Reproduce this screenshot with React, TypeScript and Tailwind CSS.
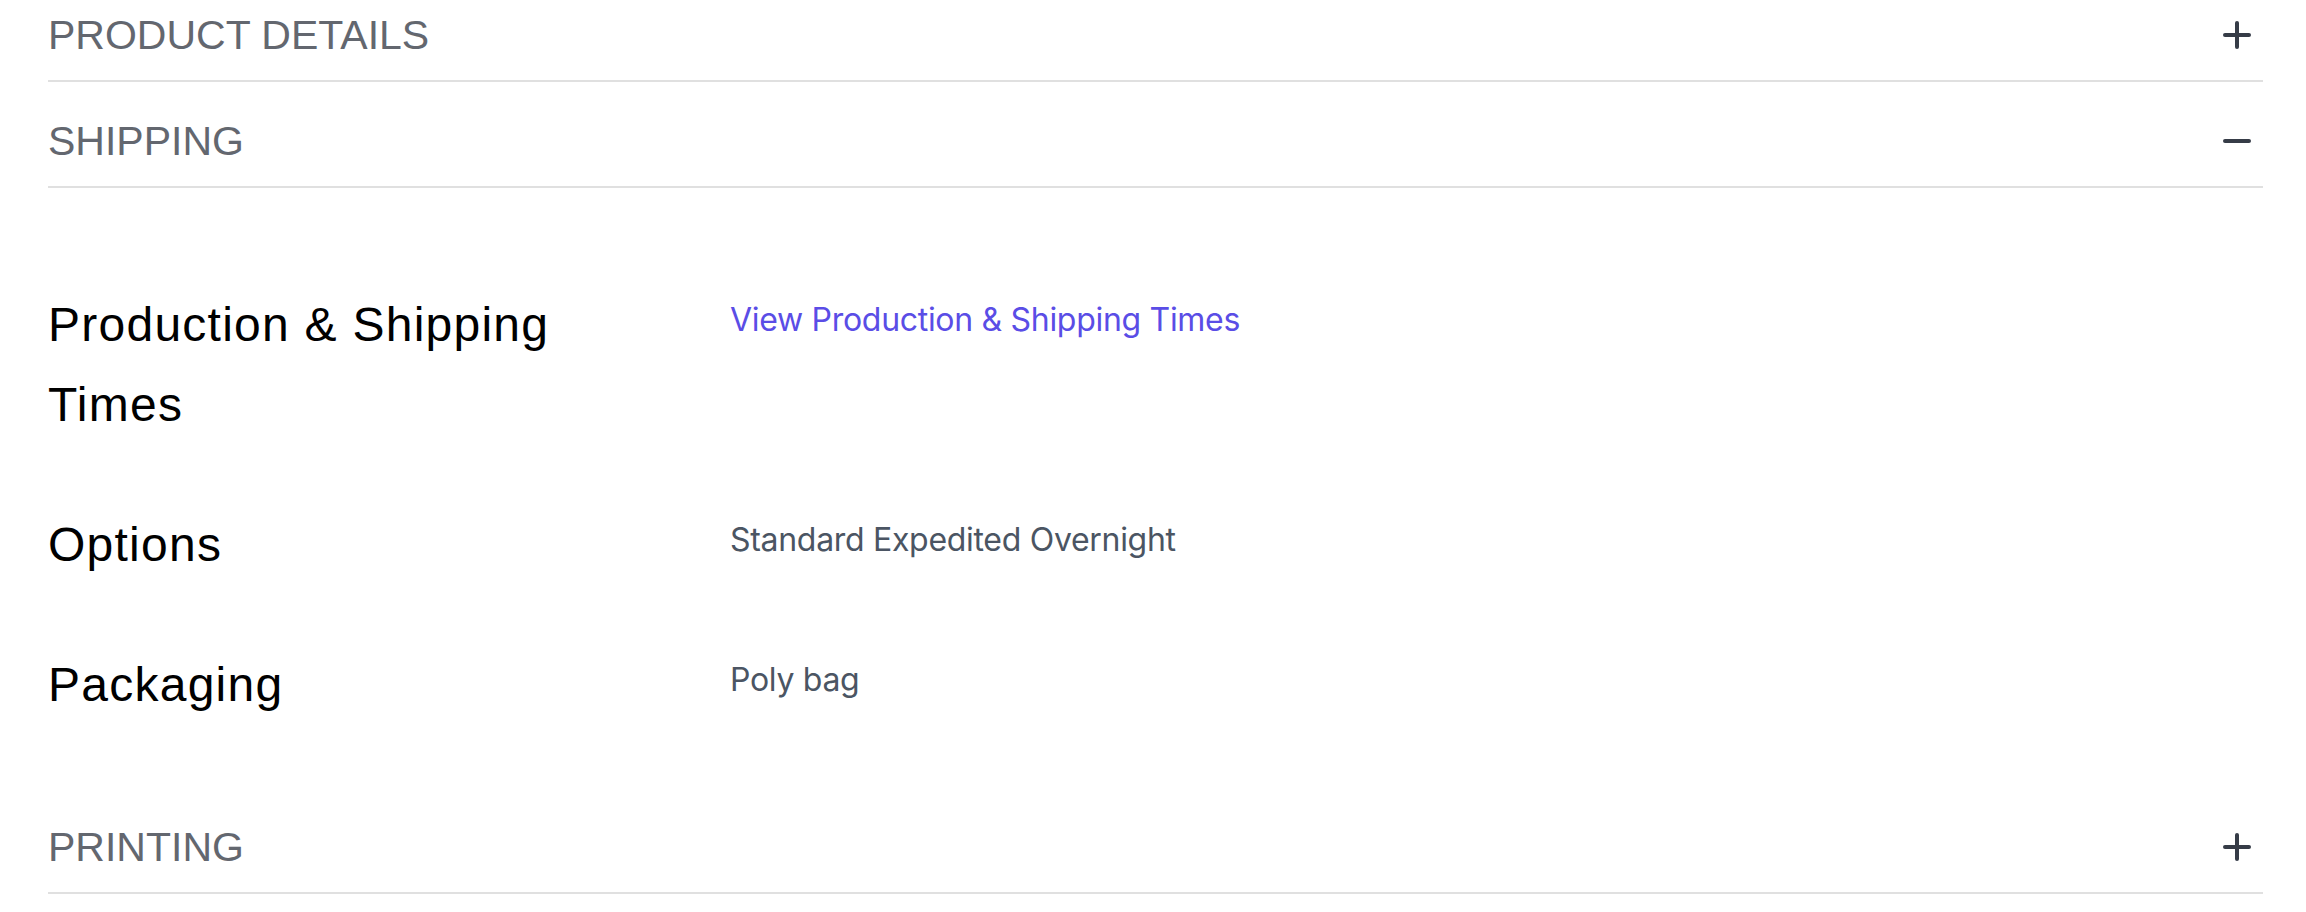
import { useState } from "react";

type Section = {
  id: string;
  title: string;
};

const sections: Section[] = [
  { id: "details", title: "Product Details" },
  { id: "shipping", title: "Shipping" },
  { id: "printing", title: "Printing" },
];

function PlusMinus({ open }: { open: boolean }) {
  return (
    <svg width="28" height="28" viewBox="0 0 28 28" fill="none" aria-hidden="true">
      <line x1="2" y1="14" x2="26" y2="14" stroke="#363c47" strokeWidth="4" strokeLinecap="round" />
      {!open && (
        <line x1="14" y1="2" x2="14" y2="26" stroke="#363c47" strokeWidth="4" strokeLinecap="round" />
      )}
    </svg>
  );
}

function ShippingBody() {
  const label =
    "text-[48px] leading-[80px] tracking-[1.25px] text-black font-['Liberation_Sans',Arial,sans-serif] pr-[100px]";
  const value =
    "text-[32px] leading-[48px] pt-[11px] tracking-[-0.3px] text-[#4b5563] font-['Inter','Noto_Sans',sans-serif]";
  return (
    <div className="flex flex-col gap-[60px] pt-[97px] pb-[63px]">
      <div className="grid grid-cols-[682px_1fr]">
        <div className={label}>Production &amp; Shipping Times</div>
        <div className={value}>
          <a href="#" className="text-[#5a4de6]">
            View Production &amp; Shipping Times
          </a>
        </div>
      </div>
      <div className="grid grid-cols-[682px_1fr]">
        <div className={label}>Options</div>
        <div className={value}>Standard Expedited Overnight</div>
      </div>
      <div className="grid grid-cols-[682px_1fr]">
        <div className={label}>Packaging</div>
        <div className={value}>Poly bag</div>
      </div>
    </div>
  );
}

export default function App() {
  const [open, setOpen] = useState<string | null>("shipping");

  return (
    <div className="min-h-screen bg-white overflow-hidden">
      <div className="-mt-[24px] pl-[48px] pr-[43px]">
        {sections.map((s) => {
          const isOpen = open === s.id;
          return (
            <div key={s.id}>
              <button
                type="button"
                onClick={() => setOpen(isOpen ? null : s.id)}
                className="flex w-full items-center justify-between border-b-2 border-[#e0e0e0] pt-[29px] pb-[15px] pr-[12px] text-left"
              >
                <span className="text-[41px] leading-[60px] uppercase text-[#63676f] font-['Liberation_Sans',Arial,sans-serif]">
                  {s.title}
                </span>
                <PlusMinus open={isOpen} />
              </button>
              {isOpen && s.id === "shipping" && <ShippingBody />}
            </div>
          );
        })}
      </div>
    </div>
  );
}
